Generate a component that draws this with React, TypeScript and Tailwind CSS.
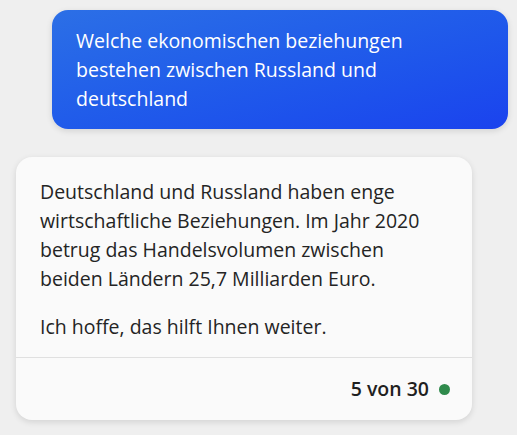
import React from 'react';

const font = { fontFamily: '"Segoe UI", "Open Sans", "Noto Sans", sans-serif' };

const App = () => {
  return (
    <div
      className="min-h-[435px] w-full bg-[#efefef] pt-[10px] pl-4 pr-[9px] flex flex-col gap-7"
      style={font}
    >
      {/* User message */}
      <div className="flex justify-end">
        <div className="w-[456px] rounded-2xl bg-linear-to-br from-[#2c6fe6] to-[#1b42ee] px-6 py-4 text-[19.5px] leading-[29px] text-white shadow-[0_2px_6px_rgba(0,0,0,0.12)]">
          Welche ekonomischen beziehungen bestehen zwischen Russland und deutschland
        </div>
      </div>

      {/* Assistant message */}
      <div className="w-[456px] rounded-2xl bg-[#fafafa] text-[#242424] shadow-[0_2px_6px_rgba(0,0,0,0.12)]">
        <div className="pl-6 pr-7 pt-5 pb-4 text-[19.5px] leading-[29px]">
          <p>
            Deutschland und Russland haben enge wirtschaftliche Beziehungen. Im Jahr 2020 betrug das
            Handelsvolumen zwischen beiden Ländern 25,7 Milliarden Euro.
          </p>
          <p className="mt-[19px]">Ich hoffe, das hilft Ihnen weiter.</p>
        </div>
        <div className="border-t border-[#e0e0e0] h-[63px] px-6 flex items-center justify-end gap-[10px]">
          <span className="text-[19.5px] font-semibold text-[#1f1f1f]">5 von 30</span>
          <span className="w-[11px] h-[11px] rounded-full bg-[#2f8a4c] -mr-[2px]"></span>
        </div>
      </div>
    </div>
  );
};

export default App;
